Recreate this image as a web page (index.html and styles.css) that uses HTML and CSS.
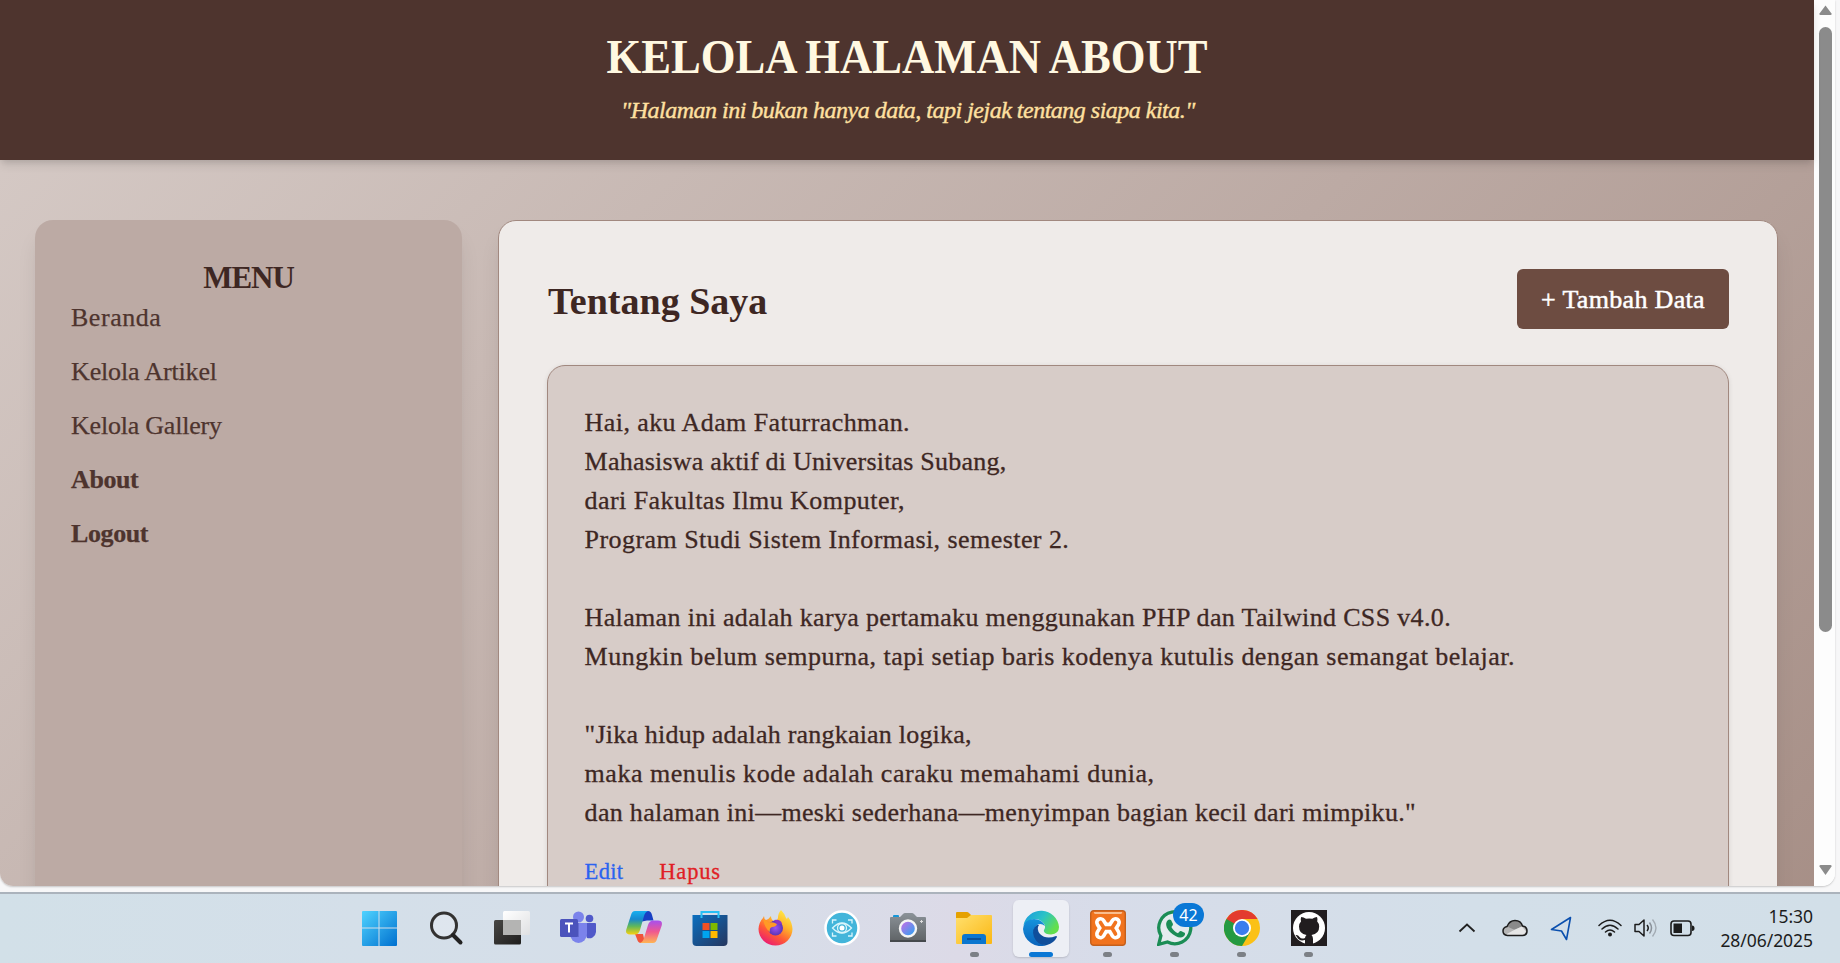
FILE: index.html
```html
<!DOCTYPE html>
<html lang="id">
<head>
<meta charset="utf-8">
<title>Kelola Halaman About</title>
<link rel="stylesheet" href="styles.css">
</head>
<body>
<div class="screen">
  <div class="window">
    <div class="page">
      <header class="header">
        <h1 class="title">KELOLA HALAMAN ABOUT</h1>
        <p class="tagline">"Halaman ini bukan hanya data, tapi jejak tentang siapa kita."</p>
      </header>
      <div class="layout">
        <aside class="sidebar">
          <h2 class="menu-title">MENU</h2>
          <nav class="menu">
            <a class="ls-50">Beranda</a>
            <a class="ls-n20">Kelola Artikel</a>
            <a class="ls-n27">Kelola Gallery</a>
            <a class="strong">About</a>
            <a class="strong">Logout</a>
          </nav>
        </aside>
        <main class="main">
          <div class="main-head">
            <h2 class="main-title">Tentang Saya</h2>
            <a class="add">+ Tambah Data</a>
          </div>
          <article class="card">
            <div class="ls-37">Hai, aku Adam Faturrachman.</div>
            <div class="ls-19">Mahasiswa aktif di Universitas Subang,</div>
            <div class="ls-43">dari Fakultas Ilmu Komputer,</div>
            <div class="ls-43">Program Studi Sistem Informasi, semester 2.</div>
            <br>
            <div class="ls-34">Halaman ini adalah karya pertamaku menggunakan PHP dan Tailwind CSS v4.0.</div>
            <div class="ls-46">Mungkin belum sempurna, tapi setiap baris kodenya kutulis dengan semangat belajar.</div>
            <br>
            <div class="ls-19">"Jika hidup adalah rangkaian logika,</div>
            <div class="ls-50">maka menulis kode adalah caraku memahami dunia,</div>
            <div class="ls-30">dan halaman ini—meski sederhana—menyimpan bagian kecil dari mimpiku."</div>
            <div class="actions"><a class="edit">Edit</a><a class="delete">Hapus</a></div>
          </article>
        </main>
      </div>
    </div>
    <div class="scrollbar">
      <svg class="arrow" width="15" height="12" viewBox="0 0 15 12"><path d="M7.500 1.500 13.500 9.500q.5 1.500-1 1.500H2.500q-1.500 0-1-1.500z" fill="#8b8b8b"/></svg>
      <div class="thumb"></div>
      <svg class="arrow" width="15" height="12" viewBox="0 0 15 12"><path d="M7.500 11 13.500 2.500q.5-1.500-1-1.500H2.500q-1.500 0-1 1.500z" fill="#8b8b8b"/></svg>
    </div>
  </div>

  <footer class="taskbar">
    <div class="apps">
      <div class="app"><svg width="36" height="36" viewBox="0 0 36 36"><defs><linearGradient id="win" x1="0" y1="0" x2="1" y2="1" ><stop stop-color="#4fd3ff"/><stop offset="1" stop-color="#0070cf"/></linearGradient></defs><path fill="url(#win)" d="M1 1h15.500v16.500H0V2q0-1 1-1zM17.500 1H34q1 0 1 1v15.500H17.500zM0 18.500h16.500V36H1q-1 0-1-1zM17.500 18.500H35V35q0 1-1 1H17.500z"/></svg></div>
      <div class="app"><svg width="36" height="36" viewBox="0 0 36 36"><circle cx="16" cy="15.500" r="12.500" fill="#e2e8f0" fill-opacity=".7" stroke="#333231" stroke-width="3"/><path d="M25 25l7.500 7.500" stroke="#222" stroke-width="4" stroke-linecap="round"/></svg></div>
      <div class="app"><svg width="36" height="36" viewBox="0 0 36 36"><defs><linearGradient id="tv" x1="0" y1="0" x2="1" y2="1"><stop stop-color="#484745"/><stop offset="1" stop-color="#1f1e1d"/></linearGradient><linearGradient id="tw" x1="0" y1="0" x2="1" y2="1"><stop stop-color="#fff"/><stop offset="1" stop-color="#dfe0e2"/></linearGradient></defs><rect y="10" width="27" height="24.500" rx="1.500" fill="url(#tv)"/><rect x="9" y="1" width="27" height="24" rx="1.500" fill="url(#tw)"/><path d="M9 10h18v15H10q-1 0-1-1z" fill="#b4b4b3"/></svg></div>
      <div class="app"><svg width="36" height="36" viewBox="0 0 36 36"><circle cx="29.500" cy="8.500" r="3.800" fill="#5059c9"/><path d="M22 13h13q1 0 1 1v8a7 7 0 0 1-9 6z" fill="#5059c9"/><circle cx="18.500" cy="7" r="5.500" fill="#7b83eb"/><path d="M10 13h17v11a8.500 9 0 0 1-17 0z" fill="#7b83eb"/><path d="M11 13h8v14h-8z" fill="#5b62c5" opacity=".7"/><rect y="9" width="18" height="18" rx="1.500" fill="#4b53bc"/><path d="M5 13.500h8M9 13.500v9" stroke="#fff" stroke-width="2"/></svg></div>
      <div class="app"><svg width="36" height="36" viewBox="0 0 36 36"><defs><linearGradient id="ca" x1="0" y1="0" x2="0" y2="1"><stop stop-color="#16b0f0"/><stop offset=".35" stop-color="#1689cf"/><stop offset=".65" stop-color="#5fb85a"/><stop offset="1" stop-color="#f8d010"/></linearGradient><linearGradient id="cb" x1="0" y1="0" x2="0" y2="1"><stop stop-color="#a650ef"/><stop offset=".5" stop-color="#f0588f"/><stop offset="1" stop-color="#ffb553"/></linearGradient></defs><path d="M17 1h5q3 0 4 4l1.500 5.500H21l-5 1z" fill="#1840c4"/><path d="M9 24h8l2 9h-4q-3 0-4-4z" fill="#f0543a"/><path d="M9 1h13q-3 1-4 5l-4 14q-1.500 4.500-5 4.500H4q-5 0-3.700-5L5 5q1-4 4-4z" fill="url(#ca)"/><path d="M27 33H14q3-1 4-5l4-13q1.500-4.500 5-4.500h5q5 0 3.700 5L31 29q-1 4-4 4z" fill="url(#cb)"/></svg></div>
      <div class="app"><svg width="36" height="36" viewBox="0 0 36 36"><defs><linearGradient id="st" x1="0" y1="0" x2="1" y2="1"><stop stop-color="#0a6fc0"/><stop offset="1" stop-color="#26365e"/></linearGradient></defs><path d="M.5 5h35v27q0 4-4 4h-27q-4 0-4-4z" fill="url(#st)"/><path d="M9.500 8V2h17v6" fill="none" stroke="#27c0f5" stroke-width="2"/><path d="M10.500 13h7v7h-7z" fill="#f25022"/><path d="M18.500 13h7v7h-7z" fill="#7fba00"/><path d="M10.500 21h7v7h-7z" fill="#00a4ef"/><path d="M18.500 21h7v7h-7z" fill="#ffb900"/></svg></div>
      <div class="app"><svg width="36" height="36" viewBox="0 0 36 36"><defs><linearGradient id="fx" x1=".8" y1="0" x2=".2" y2="1"><stop stop-color="#fff04a"/><stop offset=".35" stop-color="#ffb52a"/><stop offset=".65" stop-color="#ff5a35"/><stop offset="1" stop-color="#e8127d"/></linearGradient><radialGradient id="fp"><stop stop-color="#9a52f5"/><stop offset="1" stop-color="#5b35b5"/></radialGradient></defs><path d="M23 0q4 4 5 8l1 1 1-2q4 5 4.500 12a17 16.500 0 0 1-34 0Q1 12 5 8l1-2q0 3 2 4 3-1 5-4 0 4 3 5 3 0 4-3 0-5 3-8z" fill="url(#fx)"/><circle cx="17.500" cy="18" r="7.500" fill="url(#fp)"/><path d="M5 9q4 1 6 4 3-2 8 1-1 3-5 3-3 1-2 5-5-3-7-13z" fill="#ff9a25"/><path d="M16 10q7-1 8 4l-5 0z" fill="#8a35c5"/></svg></div>
      <div class="app"><svg width="36" height="36" viewBox="0 0 36 36"><circle cx="18" cy="18" r="16.500" fill="#43b5da" stroke="#fff" stroke-width="2.500"/><g fill="none" stroke="#d9f5fb" stroke-width="1.300"><path d="M8.500 13.500V10h4M24 10h4v3.500M8.500 22.500V26h4M24 26h4v-3.500"/><path d="M8.500 18q9.500-10 19 0-9.500 10-19 0z"/><circle cx="18" cy="18" r="4.500"/></g><circle cx="18" cy="18" r="2.500" fill="#fff"/></svg></div>
      <div class="app"><svg width="36" height="36" viewBox="0 0 36 36"><defs><linearGradient id="lens" x1="0" y1="0" x2="1" y2="1"><stop offset=".2" stop-color="#b176e8"/><stop offset="1" stop-color="#1ba7f2"/></linearGradient><linearGradient id="cam" x2="0" y2="1"><stop stop-color="#8b9298"/><stop offset="1" stop-color="#5e6265"/></linearGradient></defs><path d="M3 8V6q0-1 1-1h4q1 0 1 1v2z" fill="#1696d8"/><path d="M1 7h9l3-3q1-1 2-1h7q1 0 2 1l3 3h8q1 0 1 1v23q0 1-1 1H1q-1 0-1-1V8q0-1 1-1z" fill="url(#cam)"/><path d="M0 30h36v2H0z" fill="#45494c"/><circle cx="18" cy="18.500" r="8" fill="url(#lens)" stroke="#f5f5f5" stroke-width="2.400"/><path d="M31.500 10v3M30 11.500h3" stroke="#ddd"/></svg></div>
      <div class="app running"><svg width="36" height="36" viewBox="0 0 36 36"><defs><linearGradient id="fo" x2="1" y2="1"><stop stop-color="#ffe06e"/><stop offset="1" stop-color="#fbb713"/></linearGradient></defs><path d="M0 3q0-1 1-1h10q1 0 2 1l3 3v5H0z" fill="#e5a100"/><path d="M0 8h11l4-3h20q1 0 1 1v27q0 1-1 1H1q-1 0-1-1z" fill="url(#fo)"/><path d="M6 34v-7q0-3 3-3h18q3 0 3 3v7z" fill="#0b76cf"/><path d="M11 29h14" stroke="#0a4d94" stroke-width="1.800"/></svg></div>
      <div class="app active"><svg width="36" height="36" viewBox="0 0 36 36"><defs><linearGradient id="e1" x1="0" y1="0" x2="1" y2=".5"><stop offset=".1" stop-color="#1c9fdd"/><stop offset=".55" stop-color="#2cc3c6"/><stop offset="1" stop-color="#63df4c"/></linearGradient><linearGradient id="e2" x2="0" y2="1"><stop stop-color="#1593dc"/><stop offset="1" stop-color="#0a63bb"/></linearGradient></defs><path d="M.5 15A18 18 0 0 1 36 17q0 7-8 7.500-6 0-7-3-.5-1 .5-2.500 1.500-3-1-6Q15 7 8 10q-5 2-7.500 5z" fill="url(#e1)"/><path d="M0 19Q1 9 11 9q8 0 11 7-5-4-9 0-4 5 0 12 4 6 11 7A18 18 0 0 1 0 19z" fill="url(#e2)"/><path d="M14 15q-6 4-3 12 4 9 13 8 7-2 10-8 0-1-1-1-10 4-16-2-4-5-1-9z" fill="#104e9b"/></svg></div>
      <div class="app running wide"><svg width="36" height="36" viewBox="0 0 36 36"><rect x=".7" y=".7" width="34.600" height="34.600" rx="3" fill="#f1731e" stroke="#c5601c" stroke-width="1.400"/><path d="M4 2h28q1 1-1 2H5Q3 3 4 2z" fill="#f9bd8e"/><path id="xa" d="M10.500 12.500 14 18l-3.500 6M25.500 12.500 22 18l3.500 6M14 18h8" fill="none" stroke="#fff" stroke-width="11" stroke-linecap="round" stroke-linejoin="round"/><path d="M10.500 12.500 14 18l-3.500 6M25.500 12.500 22 18l3.500 6M14 18h8" fill="none" stroke="#f1731e" stroke-width="3.600" stroke-linecap="round" stroke-linejoin="round"/></svg></div>
      <div class="app running wide"><svg width="36" height="36" viewBox="0 0 36 36"><path d="M1.700 34.300l2.200-8.600A16 16 0 1 1 10.500 32z" fill="#e4ecee" stroke="#1b8d55" stroke-width="3.300"/><path d="M11 10q1.500-1 3 0l2 4q.3 1-1.600 3 2.300 4.500 6.600 6.200 2-2.800 3-2.200l4 2q.5 2-1.500 3.500-3 2.300-8-.5-6-3-8.700-8.500Q8 12.500 11 10z" fill="#1b8d55"/></svg><span class="badge">42</span></div>
      <div class="app running wide"><svg width="36" height="36" viewBox="0 0 36 36"><circle cx="18" cy="18" r="18" fill="#fbc116"/><path d="M2.400 9A18 18 0 0 1 33.600 9H18L10 22.500z" fill="#e33b2e"/><path d="M2.400 9A18 18 0 0 0 18 36l8-13.500-8-4.500z" fill="#249a41"/><circle cx="18" cy="18" r="9" fill="#fff"/><circle cx="18" cy="18" r="7.200" fill="#3b7ded"/></svg></div>
      <div class="app running wide"><svg width="36" height="36" viewBox="0 0 36 36"><path d="M0 0h36v36H0z" fill="#211d1f"/><circle cx="18" cy="18" r="16" fill="#fff"/><path d="M14 35v-5q-6 1.500-8-3l-1.500-2q2.500-.5 4 2 2 2.500 5.500 1 .3-2 1.500-3-7.500-1-7.500-8.500 0-3 2-5-.8-2 .2-4.500 2.300 0 4.800 1.800 3.300-.8 6.300 0 2.700-1.800 4.700-1.800 1 2.500.2 4.500 2 2 2 5 0 7.500-7.700 8.500 1.500 1.500 1.500 4v6z" fill="#211d1f"/></svg></div>
    </div>
    <div class="tray">
      <svg class="t-up" width="18" height="10" viewBox="0 0 18 10"><path d="M1.500 8.500 9 1.500l7.500 7" fill="none" stroke="#222" stroke-width="1.800"/></svg>
      <svg class="t-cloud" width="26" height="18" viewBox="0 0 26 18"><path d="M5.500 16.500q-4.500-.5-4.500-4.500 0-3.500 4-4.500 2.500-6 8-6 6 0 7.500 5.500 4.500.5 4.500 5t-4.500 4.500z" fill="#b5b5b5"/><path d="M5 7.500q2.500-6 8-6 6 0 7.500 5.500L13 11z" fill="#8a8a8a"/><path d="M4 15.500 13 10.500l7-3 4 5-3 4H6z" fill="#e6e6e6"/><path d="M5.500 16.500q-4.500-.5-4.500-4.500 0-3.500 4-4.500 2.500-6 8-6 6 0 7.500 5.500 4.500.5 4.500 5t-4.500 4.500z" fill="none" stroke="#1c1c1c" stroke-width="1.500"/></svg>
      <svg class="t-nav" width="22" height="25" viewBox="0 0 22 25"><path d="M20.500 1.500 1.500 13.500l10 1.500 5 8.500z" fill="none" stroke="#0a4fae" stroke-width="1.600" stroke-linejoin="round"/></svg>
      <svg class="t-wifi" width="24" height="18" viewBox="0 0 24 18"><g fill="none" stroke="#1c1c1c" stroke-width="1.500" stroke-linecap="round"><path d="M1 6.500q11-10.500 22 0M4 10q8-7.500 16 0M7.500 13q4.500-4 9 0"/></g><circle cx="12" cy="15.500" r="2" fill="#1c1c1c"/></svg>
      <svg class="t-vol" width="24" height="20" viewBox="0 0 24 20"><path d="M1 6.500h4L10 2v16L5 13.500H1zM13 7q2.500 3 0 6" fill="none" stroke="#1c1c1c" stroke-width="1.500" stroke-linejoin="round"/><path d="M15.500 4.500q4 5.500 0 11" fill="none" stroke="#8a9199" stroke-width="1.500"/><path d="M18.500 1.500q7 8.500 0 17" fill="none" stroke="#a3abb3" stroke-width="1.400"/></svg>
      <svg class="t-bat" width="25" height="17" viewBox="0 0 25 17"><rect x="1" y="1" width="20" height="14.500" rx="3" fill="none" stroke="#1c1c1c" stroke-width="1.600"/><path d="M3.500 3.500H12V13H3.500z" fill="#1c1c1c"/><path d="M22 5.500q2.500 0 2.500 2.700T22 11z" fill="#1c1c1c"/></svg>
      <div class="clock"><span>15:30</span><span>28/06/2025</span></div>
    </div>
  </footer>
</div>
</body>
</html>
```
FILE: styles.css
```css
* { box-sizing: border-box; }
body { margin: 0; background: #f7f7f8; font-family: "Liberation Serif", "Times New Roman", serif; }
h1, h2, p { margin: 0; }
svg { display: block; flex: none; }

.screen { width: 1840px; height: 963px; overflow: hidden; display: flex; flex-direction: column; }

/* Browser viewport */
.window { width: 1835px; height: 886px; flex: none; display: flex; overflow: hidden; border-radius: 0 0 13px 13px; box-shadow: 0 1px 2px rgba(0, 0, 0, .2); background: #fff; }
.page { width: 1814px; height: 1230px; flex: none; background: linear-gradient(135deg, #d7ccc8, #bcaaa4 50%, #a1887f); color: #3e2723; }
.header { position: relative; height: 160px; padding-top: 27px; background: #4e342e; text-align: center; box-shadow: 0 6px 9px -1px rgba(0, 0, 0, .1), 0 3px 6px -2px rgba(0, 0, 0, .1); }
.title { font-size: 49.500px; line-height: 60px; transform: scaleX(.902); word-spacing: -1px; color: #fff8e1; }
.tagline { margin: 5px 0 0 2px; font-size: 24px; line-height: 36px; font-style: italic; letter-spacing: -.5px; color: #ffe0a0; -webkit-text-stroke: .4px #ffe0a0; }

.layout { display: flex; gap: 36px; padding: 60px 37px 0 35px; height: 1070px; }
.sidebar { width: 427px; flex: none; padding: 35px 36px; background: #bcaaa4; border-radius: 18px; box-shadow: 0 15px 22px -4px rgba(0, 0, 0, .1), 0 6px 9px -6px rgba(0, 0, 0, .1); }
.menu-title { font-size: 31px; line-height: 46px; text-align: center; letter-spacing: -1px; }
.menu { display: flex; flex-direction: column; gap: 24px; padding-top: 1.500px; color: #4e342e; }
.menu a { font-size: 26px; line-height: 30px; -webkit-text-stroke: .25px; }
.menu .strong { font-weight: 700; letter-spacing: -.400px; }

.main { width: 1280px; flex: none; padding: 48px; background: #efebe9; border: 1px solid #a1887f; border-radius: 18px; box-shadow: 0 15px 22px -4px rgba(0, 0, 0, .1), 0 6px 9px -6px rgba(0, 0, 0, .1); }
.main-head { display: flex; justify-content: space-between; align-items: center; height: 60px; }
.main-title { padding: 4px 0 0 1px; font-size: 38px; line-height: 60px; }
.add { height: 60px; width: 212px; padding-top: 1px; border-radius: 6px; background: #6d4c41; color: #fff; font-size: 26px; line-height: 60px; text-align: center; letter-spacing: .33px; -webkit-text-stroke: .5px #fff; }
.card { height: 620px; margin-top: 36px; padding: 37px 36px; font-size: 26px; line-height: 39px; background: #d7ccc8; border: 1px solid #a1887f; border-radius: 18px; box-shadow: 0 1px 5px rgba(0, 0, 0, .1); white-space: nowrap; -webkit-text-stroke: .3px; }
.card > div { padding-left: .6px; }
.actions { display: flex; gap: 36px; margin-top: 25px; font-size: 22.500px; line-height: 30px; }
.edit { color: #2b63f0; letter-spacing: .3px; }
.delete { color: #e01f26; letter-spacing: .8px; }

/* Per-line tracking */
.ls-n27 { letter-spacing: -.22px; }
.ls-n20 { letter-spacing: -.15px; }
.ls-19 { letter-spacing: .21px; }
.ls-30 { letter-spacing: .3px; }
.ls-34 { letter-spacing: .34px; }
.ls-37 { letter-spacing: .42px; }
.ls-43 { letter-spacing: .44px; }
.ls-46 { letter-spacing: .48px; }
.ls-50 { letter-spacing: .53px; }

.scrollbar { width: 21px; height: 886px; flex: none; display: flex; flex-direction: column; background: #fdfdfd; padding: 4px 0 10px 4px; }
.thumb { width: 13px; height: 605px; margin: 11px 0 auto 1px; border-radius: 7px; background: #8b8b8b; }

/* Windows taskbar */
.taskbar { height: 71px; flex: none; margin-top: 6px; border-top: 2px solid #abb3bc; display: flex; font-family: "Noto Sans", "Open Sans", sans-serif; background: linear-gradient(90deg, #d2e0e8, #d4dfe9 20%, #d6dee9 40%, #dcdae7 52%, #d7dce9 60%, #d3dfe9 80%, #d2dfe8); }
.apps { display: flex; width: 996px; padding: 6px 0 0 347px; box-sizing: content-box; flex: none; }
.app { position: relative; width: 66px; height: 57px; flex: none; display: flex; justify-content: center; padding-top: 10px; }
.app.wide { width: 67px; left: 1px; }
.app.running::after { content: ""; position: absolute; left: 29px; top: 52px; width: 9px; height: 5px; border-radius: 3px; background: #7c8086; }
.app.active { width: 56px; margin: 0 4px 0 6px; background: #edeff5; border-radius: 6px; box-shadow: 0 1px 2px rgba(0, 0, 0, .15); }
.app.active::after { content: ""; position: absolute; left: 16px; top: 52px; width: 24px; height: 5px; border-radius: 3px; background: #0a77d5; }
.badge { position: absolute; left: 32px; top: 3px; width: 31px; height: 24px; border-radius: 12px; background: #0a78d6; color: #fff; font-size: 16px; line-height: 24px; text-align: center; }
.tray { position: relative; flex: 1; display: flex; align-items: flex-start; padding-left: 115px; color: #1c1c1c; }
.t-up { margin-top: 29px; }
.t-cloud { margin: 25px 0 0 26px; }
.t-nav { margin: 22px 0 0 22px; }
.t-wifi { margin: 25px 0 0 26px; }
.t-vol { margin: 24px 0 0 12px; }
.t-bat { margin: 26px 0 0 12px; }
.clock { display: flex; flex-direction: column; align-items: flex-end; margin-left: auto; padding: 10px 27px 0 0; font-size: 17.500px; line-height: 24px; letter-spacing: -.05px; }
```
